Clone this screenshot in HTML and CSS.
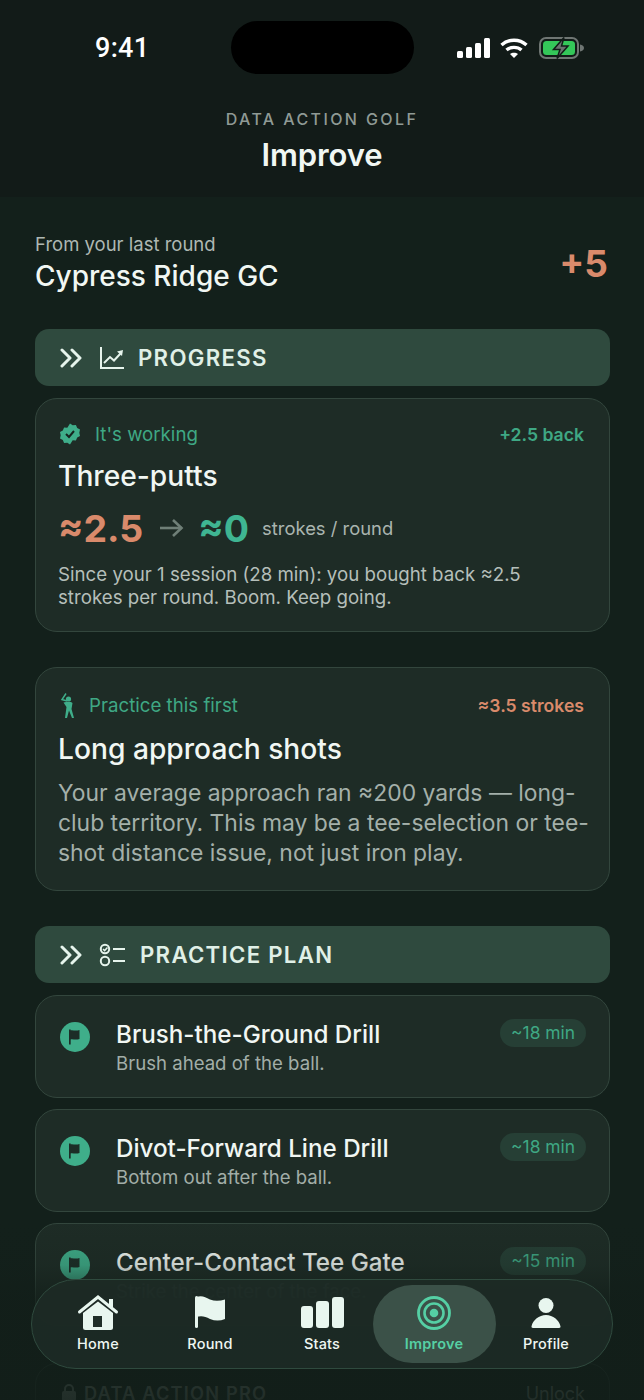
FILE: index.html
```html
<!DOCTYPE html>
<html>

<head>
	<meta charset="utf-8" />
	<title>Improve</title>
	<meta name="viewport" content="width=device-width, initial-scale=1" />
	<link rel="stylesheet" href="styles.css">
</head>

<body>
	<div class="screen">
		<header class="top">
			<div class="status">
				<span class="time">9:41</span>
				<div class="island"></div>
				<div class="status-icons">
					<svg width="33" height="20" viewBox="0 0 33 20" fill="#fff"><rect x="0" y="13" width="6" height="7" rx="1.500"/><rect x="9" y="9" width="6" height="11" rx="1.500"/><rect x="18" y="5" width="6" height="15" rx="1.500"/><rect x="27" y="0" width="6" height="20" rx="1.500"/></svg>
					<svg width="28" height="20" viewBox="0 0 28 20" fill="none" stroke="#fff" stroke-width="3.400"><path d="M1.500 7C8.500 .6 19.500 .6 26.500 7"/><path d="M6.500 12C10.500 8.500 17.500 8.500 21.500 12"/><path d="M14 20l-4-4c2.200-1.800 5.800-1.800 8 0z" fill="#fff" stroke="none"/></svg>
					<svg class="battery" width="46" height="22" viewBox="0 0 46 22"><rect x="1" y="1" width="38" height="20" rx="6" fill="none" stroke="#6f7673" stroke-width="2"/><rect x="4" y="4" width="32" height="14" rx="3.500" fill="#34c759"/><path d="M41 7.500c2.500.5 4 1.800 4 3.500s-1.500 3-4 3.500z" fill="#6f7673"/><path d="M25 .5L14.500 12.500h6.500L18 21.500l11-12.500h-6.500z" fill="#6b7270" stroke="#121c18" stroke-width="1.500"/></svg>
				</div>
			</div>
			<div class="eyebrow">DATA ACTION GOLF</div>
			<h1 class="page-title">Improve</h1>
		</header>

		<main class="content">
			<section class="last-round">
				<div>
					<div class="last-label">From your last round</div>
					<div class="last-name">Cypress Ridge GC</div>
				</div>
				<div class="last-score">+5</div>
			</section>

			<div class="bar">
				<svg class="chev" width="24" height="20" viewBox="0 0 24 20" fill="none" stroke="#e6f4ec" stroke-width="3" stroke-linecap="round" stroke-linejoin="round"><path d="M3 2l8 8-8 8"/><path d="M13 2l8 8-8 8"/></svg>
				<svg class="bar-icon" width="26" height="24" viewBox="0 0 26 24" fill="none" stroke="#e6f4ec" stroke-width="2"><path d="M2 1v21h23"/><path d="M5 17l6-6 4 3.500 7-7.500"/><path d="M18 5.500l6-1.500-1 6z" fill="#e6f4ec" stroke="none"/></svg>
				<span class="bar-text">PROGRESS</span>
			</div>

			<article class="card card-progress">
				<div class="card-head">
					<div class="tag">
						<svg width="24" height="24" viewBox="0 0 24 24"><path d="M12 1.500l2.700 1.800 3.200-.3 1.300 3 2.800 1.600-.7 3.200.7 3.200-2.800 1.600-1.300 3-3.200-.3L12 22.500l-2.700-1.800-3.200.3-1.300-3-2.800-1.600.7-3.200-.7-3.200 2.800-1.600 1.300-3 3.200.3z" fill="#3fae8a"/><path d="M8 12l3 3 5-6" fill="none" stroke="#16241f" stroke-width="2"/></svg>
						<span class="tag-text">It's working</span>
					</div>
					<span class="head-right green">+2.5 back</span>
				</div>
				<h2 class="card-title">Three-putts</h2>
				<div class="delta">
					<span class="num orange">≈2.5</span>
					<svg class="arrow" width="26" height="20" viewBox="0 0 26 20" fill="none" stroke="#6f7f77" stroke-width="2.600"><path d="M1 10h22"/><path d="M14 2l8.500 8-8.500 8"/></svg>
					<span class="num teal">≈0</span>
					<span class="delta-unit">strokes / round</span>
				</div>
				<p class="card-small">Since your 1 session (28 min): you bought back ≈2.5 strokes per round. Boom. Keep going.</p>
			</article>

			<article class="card card-first">
				<div class="card-head">
					<div class="tag tag-tight">
						<svg width="20" height="28" viewBox="0 0 20 28" fill="#3fae8a"><circle cx="10.500" cy="8" r="2.600"/><path d="M8 11h5l1.500 1-1 6 2.500 9h-2l-3-7.500L9 27H7l1.500-11-3-4.500z"/><path d="M9 10L4 8.500l4-6" fill="none" stroke="#3fae8a" stroke-width="1.500"/></svg>
						<span class="tag-text">Practice this first</span>
					</div>
					<span class="head-right orange">≈3.5 strokes</span>
				</div>
				<h2 class="card-title">Long approach shots</h2>
				<p class="card-body">Your average approach ran ≈200 yards — long-club territory. This may be a tee-selection or tee-shot distance issue, not just iron play.</p>
			</article>

			<div class="bar bar-plan">
				<svg class="chev" width="24" height="20" viewBox="0 0 24 20" fill="none" stroke="#e6f4ec" stroke-width="3" stroke-linecap="round" stroke-linejoin="round"><path d="M3 2l8 8-8 8"/><path d="M13 2l8 8-8 8"/></svg>
				<svg class="bar-icon" width="28" height="24" viewBox="0 0 28 24" fill="none" stroke="#e6f4ec" stroke-width="2"><circle cx="6" cy="6" r="4.200"/><path d="M4 6l1.600 1.600L8.500 4.500" stroke-width="1.500"/><circle cx="6" cy="18" r="4.200"/><path d="M14 6h12M14 18h12"/></svg>
				<span class="bar-text">PRACTICE PLAN</span>
			</div>

			<article class="drill">
				<div class="drill-icon"><svg width="18" height="18" viewBox="0 0 18 18"><path d="M3 1.500h1.700v15H3z" fill="#1c2d27"/><path d="M4 2.500c3-1 5 1 9.500-.5v9c-4.500 1.500-6.500-.5-9.500.5z" fill="#1c2d27"/></svg></div>
				<div class="drill-text">
					<div class="drill-name">Brush-the-Ground Drill</div>
					<div class="drill-sub">Brush ahead of the ball.</div>
				</div>
				<span class="pill">~18 min</span>
			</article>

			<article class="drill">
				<div class="drill-icon"><svg width="18" height="18" viewBox="0 0 18 18"><path d="M3 1.500h1.700v15H3z" fill="#1c2d27"/><path d="M4 2.500c3-1 5 1 9.500-.5v9c-4.500 1.500-6.500-.5-9.500.5z" fill="#1c2d27"/></svg></div>
				<div class="drill-text">
					<div class="drill-name">Divot-Forward Line Drill</div>
					<div class="drill-sub">Bottom out after the ball.</div>
				</div>
				<span class="pill">~18 min</span>
			</article>

			<article class="drill">
				<div class="drill-icon"><svg width="18" height="18" viewBox="0 0 18 18"><path d="M3 1.500h1.700v15H3z" fill="#1c2d27"/><path d="M4 2.500c3-1 5 1 9.500-.5v9c-4.500 1.500-6.500-.5-9.500.5z" fill="#1c2d27"/></svg></div>
				<div class="drill-text">
					<div class="drill-name">Center-Contact Tee Gate</div>
					<div class="drill-sub">Strike the center of the face.</div>
				</div>
				<span class="pill">~15 min</span>
			</article>

			<div class="locked">
				<svg width="16" height="18" viewBox="0 0 16 18" fill="#b0bcb6"><rect x="1" y="7" width="14" height="10" rx="2"/><path d="M4 7V5a4 4 0 0 1 8 0v2" fill="none" stroke="#b0bcb6" stroke-width="2"/></svg>
				<span class="locked-text">DATA ACTION PRO</span>
				<span class="locked-link">Unlock</span>
			</div>
		</main>

		<div class="fade"></div>

		<nav class="tabs">
			<div class="tab">
				<svg width="42" height="36" viewBox="0 0 42 36"><path d="M2.500 17L21 2l18.500 15" fill="none" stroke="#e8f6ef" stroke-width="3" stroke-linecap="round"/><rect x="32" y="4" width="4" height="9" fill="#e8f6ef"/><path d="M6 18L21 6.500 36 18v14.500a2.500 2.500 0 0 1-2.500 2.500h-25A2.500 2.500 0 0 1 6 32.500z" fill="#e8f6ef"/><rect x="16" y="21" width="9" height="11" fill="#1f2e28"/></svg>
				<span class="tab-label">Home</span>
			</div>
			<div class="tab">
				<svg width="30" height="36" viewBox="0 0 30 36" fill="#e8f6ef"><rect x="0" y="1" width="3" height="32" rx="1.500"/><path d="M1 2c6-2 9 0 14 2.500 5 2 10 1.500 15 0V24c-5 2-10 2-15 0-5-2.500-8-3.500-14-2z"/></svg>
				<span class="tab-label">Round</span>
			</div>
			<div class="tab">
				<svg width="43" height="36" viewBox="0 0 43 36" fill="#e8f6ef"><rect x="0" y="11" width="12" height="22" rx="3"/><rect x="15" y="6" width="13" height="27" rx="3"/><rect x="31" y="2" width="12" height="31" rx="3"/></svg>
				<span class="tab-label">Stats</span>
			</div>
			<div class="tab tab-active">
				<svg width="36" height="36" viewBox="0 0 36 36" fill="none" stroke="#55cfa4"><circle cx="18" cy="18" r="15.500" stroke-width="2.800"/><circle cx="18" cy="18" r="9.500" stroke-width="2.600"/><circle cx="18" cy="18" r="4.300" fill="#55cfa4" stroke="none"/></svg>
				<span class="tab-label">Improve</span>
			</div>
			<div class="tab">
				<svg width="30" height="36" viewBox="0 0 30 36" fill="#e8f6ef"><circle cx="15" cy="10.500" r="7.500"/><path d="M2 33c-1.200 0-1.800-.8-1.400-2C2 25 8 20 15 20s13 5 14.400 11c.4 1.200-.2 2-1.400 2z"/></svg>
				<span class="tab-label">Profile</span>
			</div>
		</nav>
	</div>
</body>

</html>
```

FILE: styles.css
```css
* {
	box-sizing: border-box;
}

html, body {
	margin: 0;
	padding: 0;
	background: #13201b;
}

.screen {
	position: relative;
	width: 644px;
	height: 1400px;
	overflow: hidden;
	font-family: "Inter", "Liberation Sans", sans-serif;
	color: #f1f7f3;
	background: #13201b;
}

/* header */
.top {
	height: 197px;
	background: #121b18;
	text-align: center;
}

.status {
	position: relative;
	display: flex;
	justify-content: space-between;
	align-items: center;
	height: 95px;
	padding: 0 59px 0 95px;
}

.time {
	font-size: 27px;
	font-weight: 500;
	color: #fff;
	font-family: "Roboto", "Inter", sans-serif;
	letter-spacing: 0.3px;
}

.island {
	position: absolute;
	left: 231px;
	top: 21px;
	width: 183px;
	height: 53px;
	border-radius: 27px;
	background: #000;
}

.status-icons {
	display: flex;
	align-items: center;
	gap: 10px;
}

.battery {
	margin-left: 1px;
}

.eyebrow {
	margin-top: 14px;
	font-size: 16px;
	line-height: 20px;
	font-weight: 500;
	letter-spacing: 2.400px;
	color: #8f9a95;
}

.page-title {
	margin: 7px 0 0;
	font-size: 31px;
	line-height: 38px;
	font-weight: 600;
	letter-spacing: -0.1px;
}

/* content */
.content {
	padding: 0 34px 0 35px;
}

.last-round {
	display: flex;
	justify-content: space-between;
	align-items: center;
	height: 132px;
}

.last-label {
	font-size: 18.500px;
	line-height: 22px;
	color: #aeb8b3;
}

.last-name {
	margin-top: 5px;
	font-size: 28px;
	line-height: 33px;
	font-weight: 500;
}

.last-score {
	margin-right: 2px;
	font-size: 37px;
	font-weight: 700;
	color: #d98a6b;
}

.bar {
	display: flex;
	align-items: center;
	height: 57px;
	padding-left: 24px;
	border-radius: 14px;
	background: #2f4a3e;
}

.bar-plan {
	margin-top: 35px;
}

.bar-icon {
	margin-left: 16px;
}

.bar-text {
	margin-left: 13px;
	font-size: 22.200px;
	font-weight: 600;
	letter-spacing: 1.300px;
	color: #e0f0e7;
}

.card {
	margin-top: 12px;
	padding: 21px 25px 0 22px;
	border: 1px solid #33463d;
	border-radius: 22px;
	background: #1e2c26;
}

.card-progress {
	height: 234px;
}

.card-first {
	height: 224px;
	margin-top: 35px;
	padding-top: 23px;
}

.card-first .card-title {
	margin-top: 13px;
}

.card-head {
	display: flex;
	justify-content: space-between;
	align-items: center;
	height: 28px;
}

.tag {
	display: flex;
	align-items: center;
	gap: 13px;
}

.tag-tight {
	gap: 11px;
}

.tag-text {
	font-size: 18.700px;
	color: #3fa884;
}

.head-right {
	font-size: 17.600px;
	font-weight: 600;
}

.green {
	color: #3fa884;
}

.orange {
	color: #d98a6b;
}

.teal {
	color: #3fb592;
}

.card-title {
	margin: 11px 0 0;
	font-size: 28.200px;
	line-height: 34px;
	font-weight: 500;
}

.delta {
	display: flex;
	align-items: center;
	margin-top: 13px;
	height: 44px;
}

.num {
	font-size: 37.500px;
	font-weight: 700;
}

.arrow {
	margin: 0 13px 0 16px;
}

.delta-unit {
	margin-left: 13px;
	font-size: 18.400px;
	color: #aab5af;
}

.card-small {
	margin: 13px 0 0;
	font-size: 18.700px;
	line-height: 23px;
	color: #b5bfba;
}

.card-body {
	margin: 12px -12px 0 0;
	font-size: 22.900px;
	line-height: 30px;
	color: #a4b0aa;
}

.drill {
	display: flex;
	align-items: flex-start;
	height: 103px;
	margin-top: 11px;
	padding: 24px 23px 0 24px;
	border: 1px solid #33463d;
	border-radius: 22px;
	background: #1e2c26;
}

.bar + .drill {
	margin-top: 12px;
}

.drill-icon {
	display: flex;
	flex: none;
	align-items: center;
	justify-content: center;
	width: 30px;
	height: 30px;
	margin-top: 2px;
	border-radius: 50%;
	background: #3fae8a;
}

.drill-text {
	flex: 1;
	margin-left: 26px;
}

.drill-name {
	font-size: 24.200px;
	line-height: 29px;
	font-weight: 500;
}

.drill-sub {
	margin-top: 2px;
	font-size: 18.600px;
	line-height: 24px;
	color: #a2aea8;
}

.pill {
	margin-top: -1px;
	padding: 0 11px;
	height: 28px;
	line-height: 28px;
	border-radius: 14px;
	font-size: 17.400px;
	color: #3fa884;
	background: #263f35;
}

.locked {
	display: flex;
	align-items: center;
	height: 60px;
	margin-top: 37px;
	padding: 0 24px 0 25px;
	border: 1px solid #33463d;
	border-radius: 22px 22px 0 0;
}

.locked-text {
	flex: 1;
	margin-left: 7px;
	font-size: 18.200px;
	font-weight: 600;
	letter-spacing: 1.200px;
	color: #b0bcb6;
}

.locked-link {
	font-size: 18px;
	color: #b0bcb6;
}

/* bottom fade and tab bar */
.fade {
	position: absolute;
	left: 0;
	right: 0;
	bottom: 0;
	height: 180px;
	background: linear-gradient(to bottom, rgba(18, 30, 25, 0) 0%, rgba(18, 30, 25, 0.18) 25%, rgba(18, 30, 25, 0.75) 45%, rgba(18, 30, 25, 0.9) 100%);
}

.tabs {
	position: absolute;
	left: 31px;
	top: 1279px;
	display: flex;
	width: 582px;
	height: 90px;
	padding: 5px 9px 5px 10px;
	border: 1.500px solid #2f4a3e;
	border-radius: 45px;
	background: rgba(28, 42, 37, 0.95);
}

.tab {
	display: flex;
	flex: none;
	flex-direction: column;
	align-items: center;
	width: 112px;
	padding-top: 10px;
	border-radius: 40px;
}

.tab-active {
	width: 123px;
	margin: 0 -5.500px;
	background: #3b5148;
}

.tab-active .tab-label {
	color: #55cfa4;
	font-weight: 600;
}

.tab-label {
	margin-top: 4px;
	font-size: 14.500px;
	line-height: 18px;
	font-weight: 500;
	letter-spacing: 0.2px;
	color: #eef6f2;
}
```
